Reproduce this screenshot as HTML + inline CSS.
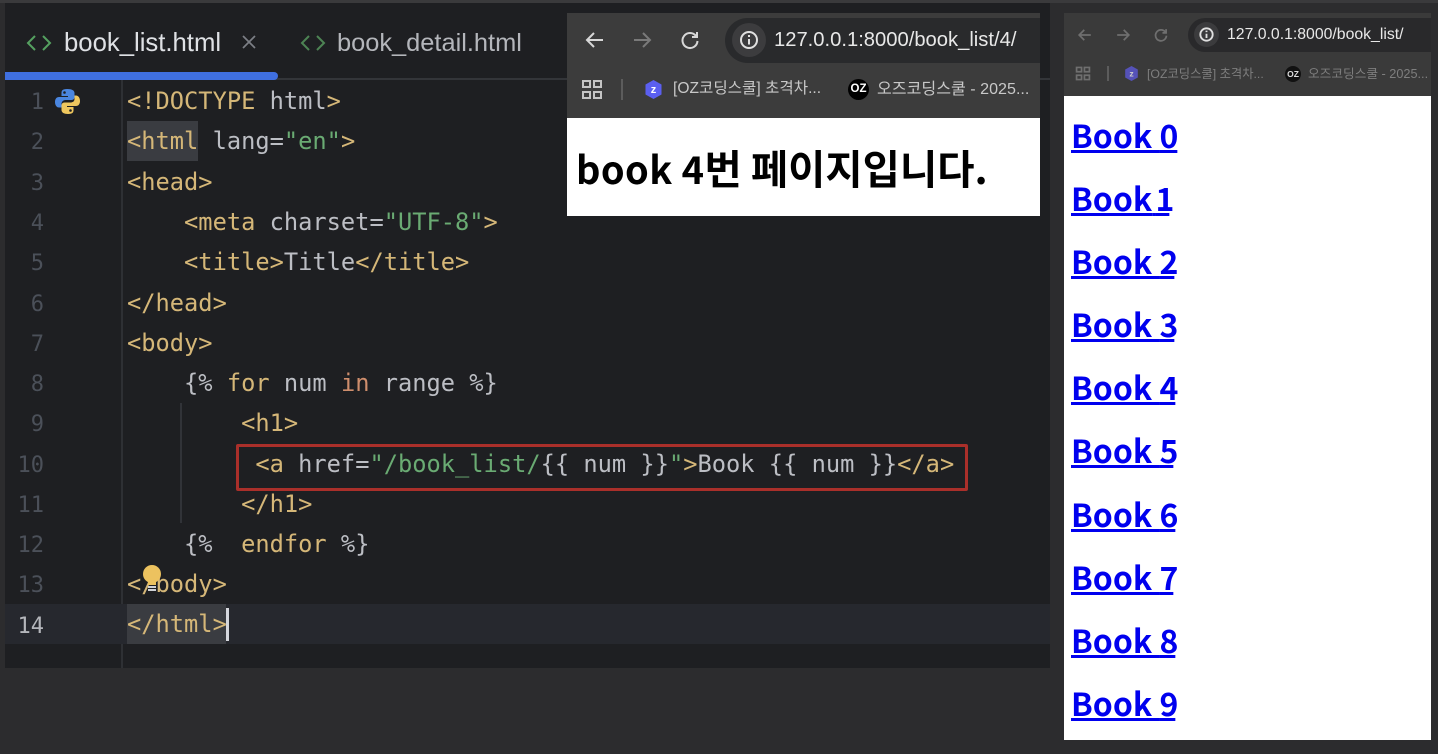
<!DOCTYPE html>
<html lang="en">
<head>
<meta charset="utf-8">
<title>Book list</title>
<style>
html,body{margin:0;padding:0;width:1438px;height:754px;overflow:hidden;background:#2c2c2e}
.a{position:absolute}
.ui{font-family:"Liberation Sans","Noto Sans CJK KR",sans-serif;white-space:nowrap}
.l{position:absolute;left:127px;height:40px;line-height:40px;font-family:"DejaVu Sans Mono","Liberation Mono",monospace;font-size:23.7px;color:#bcbec4;white-space:pre}
.n{position:absolute;width:40px;left:4px;text-align:right;height:40px;line-height:40px;font-family:"DejaVu Sans Mono","Liberation Mono",monospace;font-size:22px;color:#4b5059;margin-top:2px}
.t{color:#d5b778}.g{color:#6aab73}.k{color:#cf8e6d}
.bk{position:absolute;left:1071px;font-family:"Noto Sans CJK KR","Liberation Sans",sans-serif;font-weight:700;font-size:32px;line-height:40px;height:40px;color:#0000ee;text-decoration:underline;text-decoration-thickness:3px;white-space:pre}
</style>
</head>
<body>
<div class="a" style="left:0;top:0;width:1438px;height:3px;background:#3a3a3c"></div>

<!-- editor -->
<div class="a" style="left:5px;top:3px;width:1045px;height:665px;background:#1e1f22"></div>
<div class="a" style="left:5px;top:78px;width:1045px;height:2px;background:#333539"></div>
<div class="a" style="left:5px;top:72px;width:273px;height:8px;background:#3f6fe0;border-radius:0 4px 4px 0"></div>
<div class="a" style="left:121px;top:80px;width:2px;height:588px;background:#2e3034"></div>

<svg class="a" style="left:26px;top:33px" width="26" height="20" viewBox="0 0 26 20" fill="none" stroke="#55a160" stroke-width="2"><path d="M9 3 2 10l7 7M17 3l7 7-7 7"/></svg>
<div class="a ui" style="left:64px;top:25px;line-height:36px;font-size:25.7px;color:#dfe1e5">book_list.html</div>
<svg class="a" style="left:241px;top:34px" width="16" height="16" viewBox="0 0 16 16" stroke="#7c7f86" stroke-width="1.7"><path d="M2 2l12 12M14 2 2 14"/></svg>
<svg class="a" style="left:300px;top:33px" width="26" height="20" viewBox="0 0 26 20" fill="none" stroke="#4d8454" stroke-width="2"><path d="M9 3 2 10l7 7M17 3l7 7-7 7"/></svg>
<div class="a ui" style="left:337px;top:25px;line-height:36px;font-size:25.4px;color:#b4b6bb">book_detail.html</div>

<!-- highlights -->
<div class="a" style="left:127px;top:121px;width:71px;height:40px;background:#3a3c41"></div>
<div class="a" style="left:5px;top:604px;width:1045px;height:40px;background:#26282e"></div>
<div class="a" style="left:127px;top:604px;width:99px;height:40px;background:#3a3c41"></div>
<div class="a" style="left:226px;top:608px;width:3px;height:33px;background:#d5d7dd"></div>
<div class="a" style="left:180px;top:403px;width:2px;height:120px;background:#313338"></div>

<!-- line numbers -->
<div class="n" style="top:81px">1</div>
<div class="n" style="top:121px">2</div>
<div class="n" style="top:162px">3</div>
<div class="n" style="top:202px">4</div>
<div class="n" style="top:242px">5</div>
<div class="n" style="top:283px">6</div>
<div class="n" style="top:323px">7</div>
<div class="n" style="top:363px">8</div>
<div class="n" style="top:403px">9</div>
<div class="n" style="top:444px">10</div>
<div class="n" style="top:484px">11</div>
<div class="n" style="top:524px">12</div>
<div class="n" style="top:564px">13</div>
<div class="n" style="top:605px;color:#b4b6bb">14</div>

<!-- python icon -->
<svg class="a" style="left:54px;top:88px" width="27" height="27" viewBox="0 0 27 27">
<path fill="#4a86e0" d="M13 1C8 1 7.500 3 7.500 5v3H14v1H5C2.500 9 1 11 1 14s1.500 5.500 4 5.500h2.500v-3.500c0-2.500 2-4 4-4h6c2 0 3-1.500 3-3V5c0-2.500-2.500-4-7-4z"/>
<path fill="#efc75e" d="M14 26c5 0 5.500-2 5.500-4v-3H13v-1h9c2.500 0 4-2 4-5s-1.500-5.500-4-5.500h-1.500V11c0 2.500-2 3.500-4 3.500h-6c-2 0-3 1.500-3 3V22c0 2.500 2.500 4 6.500 4z"/>
<circle cx="10.500" cy="4.500" r="1.300" fill="#1e1f22"/><circle cx="16.500" cy="22.500" r="1.300" fill="#1e1f22"/>
</svg>

<!-- code -->
<div class="l" style="top:81px"><span class="t">&lt;!DOCTYPE</span> html<span class="t">&gt;</span></div>
<div class="l" style="top:121px"><span class="t">&lt;html</span> lang=<span class="g">"en"</span><span class="t">&gt;</span></div>
<div class="l t" style="top:162px">&lt;head&gt;</div>
<div class="l" style="top:202px">    <span class="t">&lt;meta</span> charset=<span class="g">"UTF-8"</span><span class="t">&gt;</span></div>
<div class="l t" style="top:242px">    &lt;title&gt;<span style="color:#bcbec4">Title</span>&lt;/title&gt;</div>
<div class="l t" style="top:283px">&lt;/head&gt;</div>
<div class="l t" style="top:323px">&lt;body&gt;</div>
<div class="l" style="top:363px">    {% <span class="t">for</span> num <span class="k">in</span> range %}</div>
<div class="l t" style="top:403px">        &lt;h1&gt;</div>
<div class="l" style="top:444px">         <span class="t">&lt;a</span> href=<span class="g">"/book_list/</span>{{ num }}<span class="g">"</span><span class="t">&gt;</span>Book {{ num }}<span class="t">&lt;/a&gt;</span></div>
<div class="l t" style="top:484px">        &lt;/h1&gt;</div>
<div class="l" style="top:524px">    {%  <span class="t">endfor</span> %}</div>
<div class="l t" style="top:564px">&lt;/body&gt;</div>
<div class="l t" style="top:604px">&lt;/html&gt;</div>

<!-- red box -->
<div class="a" style="left:236px;top:444px;width:726px;height:41px;border:3px solid #aa2f2a;border-radius:2px"></div>

<!-- bulb -->
<svg class="a" style="left:142px;top:564px" width="20" height="30" viewBox="0 0 20 30"><circle cx="10" cy="10" r="9" fill="#ecc25f"/><path d="M6 18h8v3H6z" fill="#ecc25f"/><path d="M6 23h8M6 26h8" stroke="#cfd1d6" stroke-width="2"/></svg>

<!-- browser 1 -->
<div class="a" style="left:567px;top:13px;width:473px;height:105px;background:#3c3c3c"></div>
<div class="a" style="left:725px;top:18px;width:315px;height:45px;background:#292a2c;border-radius:23px 0 0 23px"></div>
<div class="a" style="left:732px;top:23px;width:34px;height:34px;border-radius:50%;background:#3c3c3e"></div>
<svg class="a" style="left:584px;top:29px" width="22" height="22" viewBox="0 0 22 22" fill="none" stroke="#d8d8d8" stroke-width="2"><path d="M19 11H3M10 4l-7 7 7 7"/></svg>
<svg class="a" style="left:631px;top:29px" width="22" height="22" viewBox="0 0 22 22" fill="none" stroke="#7a7a7a" stroke-width="2"><path d="M3 11h16M12 4l7 7-7 7"/></svg>
<svg class="a" style="left:679px;top:29px" width="22" height="22" viewBox="0 0 22 22" fill="none" stroke="#d8d8d8" stroke-width="2"><path d="M17 7a7.500 7.500 0 1 0 1.500 5"/><path d="M18 3v5h-5" /></svg>
<svg class="a" style="left:738px;top:29px" width="22" height="22" viewBox="0 0 22 22" fill="none" stroke="#e0e0e0" stroke-width="2"><circle cx="11" cy="11" r="8"/><path d="M11 10v5.500M11 6v2"/></svg>
<div class="a ui" style="left:774px;top:27px;line-height:26px;font-size:20.2px;color:#e8e8e8">127.0.0.1:8000/book_list/4/</div>
<svg class="a" style="left:581px;top:79px" width="22" height="21" viewBox="0 0 22 21" fill="none" stroke="#c4c4c4" stroke-width="2"><path d="M2 2h7v6H2zM13 2h7v6h-7zM2 13h7v6H2zM13 13h7v6h-7z"/></svg>
<div class="a" style="left:621px;top:79px;width:2px;height:21px;background:#5c5c5c"></div>
<svg class="a" style="left:644px;top:80px" width="19" height="19" viewBox="0 0 19 19"><path d="M9.500 0l8 4.500v10l-8 4.500-8-4.500v-10z" fill="#5b5ff0"/><text x="9.500" y="13" font-family="Liberation Sans" font-size="11" font-weight="700" fill="#fff" text-anchor="middle">z</text></svg>
<div class="a ui" style="left:673px;top:78px;line-height:22px;font-size:15.6px;color:#c8c8c8">[OZ코딩스쿨] 초격차...</div>
<div class="a ui" style="left:848px;top:79px;width:21px;height:21px;border-radius:50%;background:#000;color:#fff;font-size:11.500px;font-weight:700;line-height:21px;text-align:center">OZ</div>
<div class="a ui" style="left:877px;top:78px;line-height:22px;font-size:16.1px;color:#c8c8c8">오즈코딩스쿨 - 2025...</div>
<div class="a" style="left:567px;top:118px;width:473px;height:98px;background:#fff"></div>
<div class="a" style="left:576px;top:141px;line-height:52px;font-size:40.5px;font-weight:700;color:#000;font-family:'Noto Sans CJK KR','Liberation Sans',sans-serif;white-space:nowrap"><span style="font-size:38px;letter-spacing:.4px">book 4</span>번 페이지입니다.</div>

<!-- browser 2 -->
<div class="a" style="left:1064px;top:13px;width:367px;height:83px;background:#3a3a3a"></div>
<div class="a" style="left:1188px;top:18px;width:243px;height:34px;background:#29292b;border-radius:17px 0 0 17px"></div>
<div class="a" style="left:1194px;top:22px;width:25px;height:25px;border-radius:50%;background:#3b3b3d"></div>
<svg class="a" style="left:1077px;top:27px" width="16" height="16" viewBox="0 0 22 22" fill="none" stroke="#6f6f6f" stroke-width="2.400"><path d="M19 11H3M10 4l-7 7 7 7"/></svg>
<svg class="a" style="left:1115px;top:27px" width="16" height="16" viewBox="0 0 22 22" fill="none" stroke="#6f6f6f" stroke-width="2.400"><path d="M3 11h16M12 4l7 7-7 7"/></svg>
<svg class="a" style="left:1153px;top:27px" width="16" height="16" viewBox="0 0 22 22" fill="none" stroke="#6f6f6f" stroke-width="2.400"><path d="M17 7a7.500 7.500 0 1 0 1.500 5"/><path d="M18 3v5h-5"/></svg>
<svg class="a" style="left:1198px;top:26px" width="17" height="17" viewBox="0 0 22 22" fill="none" stroke="#e0e0e0" stroke-width="2.400"><circle cx="11" cy="11" r="8"/><path d="M11 10v5.500M11 6v2"/></svg>
<div class="a ui" style="left:1227px;top:24px;line-height:22px;font-size:15.8px;color:#e8e8e8">127.0.0.1:8000/book_list/</div>
<svg class="a" style="left:1075px;top:66px" width="16" height="15" viewBox="0 0 22 21" fill="none" stroke="#6f6f6f" stroke-width="2.400"><path d="M2 2h7v6H2zM13 2h7v6h-7zM2 13h7v6H2zM13 13h7v6h-7z"/></svg>
<div class="a" style="left:1107px;top:66px;width:1.500px;height:15px;background:#5c5c5c"></div>
<svg class="a" style="left:1124px;top:66px" width="15" height="15" viewBox="0 0 19 19"><path d="M9.500 0l8 4.500v10l-8 4.500-8-4.500v-10z" fill="#5552b8"/><text x="9.500" y="13" font-family="Liberation Sans" font-size="11" font-weight="700" fill="#ccc" text-anchor="middle">z</text></svg>
<div class="a ui" style="left:1147px;top:65px;line-height:18px;font-size:12.3px;color:#7e7e7e">[OZ코딩스쿨] 초격차...</div>
<div class="a ui" style="left:1285px;top:66px;width:16px;height:16px;border-radius:50%;background:#111;color:#ddd;font-size:8.500px;font-weight:700;line-height:16px;text-align:center">OZ</div>
<div class="a ui" style="left:1308px;top:65px;line-height:18px;font-size:12.7px;color:#7e7e7e">오즈코딩스쿨 - 2025...</div>
<div class="a" style="left:1064px;top:96px;width:367px;height:644px;background:#fff"></div>
<div class="bk" style="top:115px">Book <span style="letter-spacing:-1px">0</span></div>
<div class="bk" style="top:178px">Book<span style="letter-spacing:-4px"> </span><span style="letter-spacing:-5px">1</span></div>
<div class="bk" style="top:241px">Book <span style="letter-spacing:-4px">2</span></div>
<div class="bk" style="top:304px">Book <span style="letter-spacing:-4px">3</span></div>
<div class="bk" style="top:367px">Book <span style="letter-spacing:-3px">4</span></div>
<div class="bk" style="top:430px">Book <span style="letter-spacing:-5px">5</span></div>
<div class="bk" style="top:494px">Book <span style="letter-spacing:-3px">6</span></div>
<div class="bk" style="top:557px">Book <span style="letter-spacing:-5px">7</span></div>
<div class="bk" style="top:620px">Book <span style="letter-spacing:-3px">8</span></div>
<div class="bk" style="top:683px">Book <span style="letter-spacing:-3px">9</span></div>
</body>
</html>
